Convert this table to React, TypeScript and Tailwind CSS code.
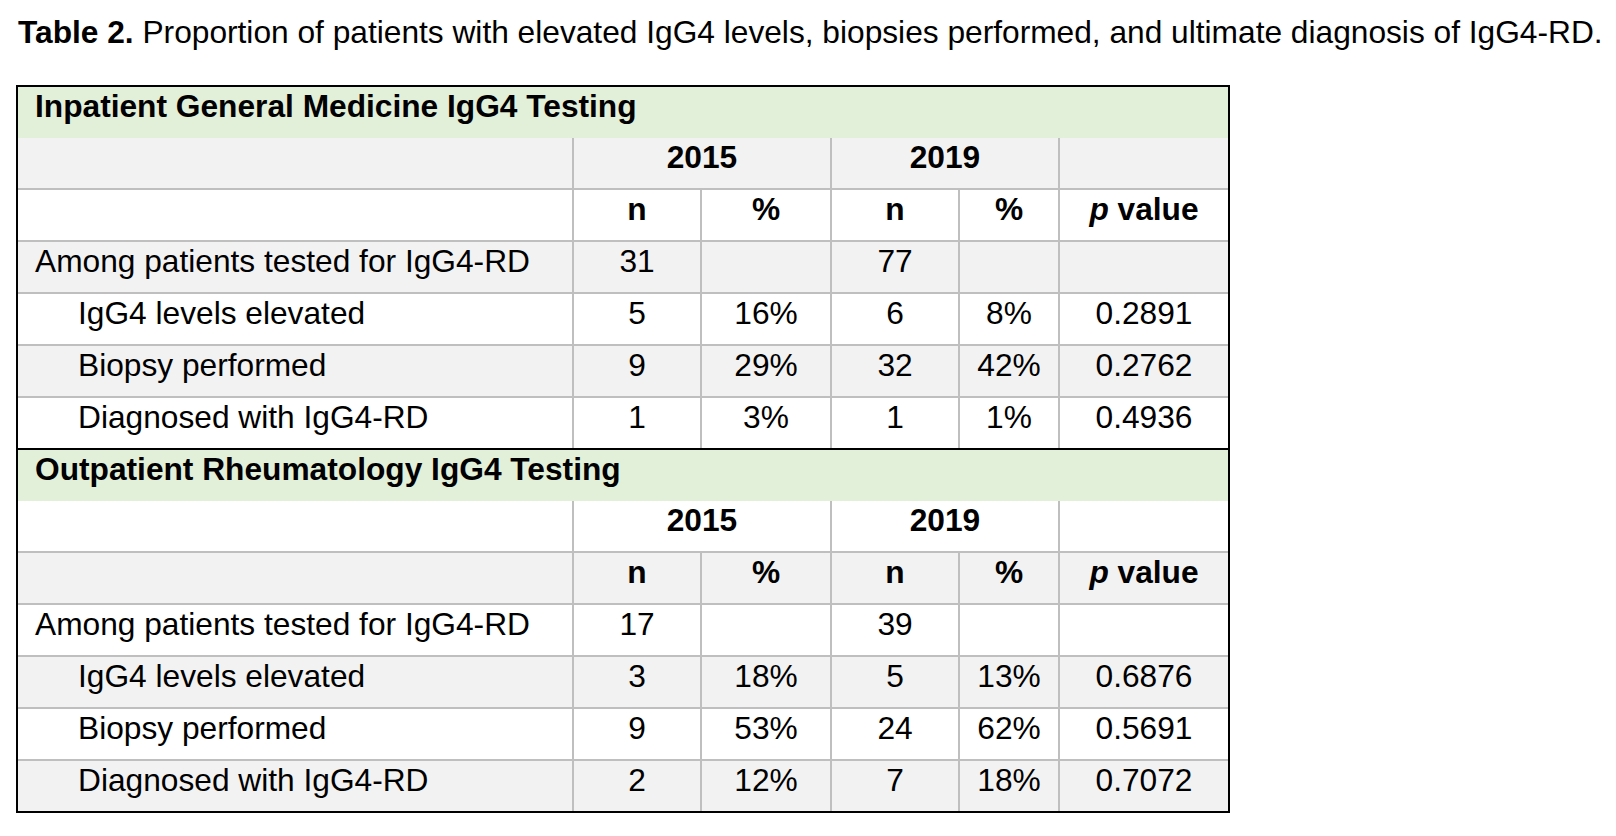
import React from 'react';

type Row = {
  label: string;
  indent?: boolean;
  n1: string;
  p1: string;
  n2: string;
  p2: string;
  pv: string;
};

const sections: { title: string; rows: Row[] }[] = [
  {
    title: 'Inpatient General Medicine IgG4 Testing',
    rows: [
      { label: 'Among patients tested for IgG4-RD', n1: '31', p1: '', n2: '77', p2: '', pv: '' },
      { label: 'IgG4 levels elevated', indent: true, n1: '5', p1: '16%', n2: '6', p2: '8%', pv: '0.2891' },
      { label: 'Biopsy performed', indent: true, n1: '9', p1: '29%', n2: '32', p2: '42%', pv: '0.2762' },
      { label: 'Diagnosed with IgG4-RD', indent: true, n1: '1', p1: '3%', n2: '1', p2: '1%', pv: '0.4936' },
    ],
  },
  {
    title: 'Outpatient Rheumatology IgG4 Testing',
    rows: [
      { label: 'Among patients tested for IgG4-RD', n1: '17', p1: '', n2: '39', p2: '', pv: '' },
      { label: 'IgG4 levels elevated', indent: true, n1: '3', p1: '18%', n2: '5', p2: '13%', pv: '0.6876' },
      { label: 'Biopsy performed', indent: true, n1: '9', p1: '53%', n2: '24', p2: '62%', pv: '0.5691' },
      { label: 'Diagnosed with IgG4-RD', indent: true, n1: '2', p1: '12%', n2: '7', p2: '18%', pv: '0.7072' },
    ],
  },
];

const cell = 'flex justify-center pt-[3px] border-r-2 border-[#bfbfbf]';

function Section({ title, rows, index }: { title: string; rows: Row[]; index: number }) {
  // first section: gray starts on the year row; second section: white
  const shade = (i: number) => ((i + index) % 2 === 0 ? 'bg-[#f2f2f2]' : 'bg-white');
  const last = index === 1;

  return (
    <>
      <div className="h-[51px] bg-[#e2efd9] pl-[17px] pt-[3px] font-bold">{title}</div>

      {/* year row */}
      <div className={`flex h-[52px] border-b-2 border-[#bfbfbf] ${shade(0)}`}>
        <div className="w-[556px] border-r-2 border-[#bfbfbf]" />
        <div className={`${cell} w-[258px] font-bold`}>2015</div>
        <div className={`${cell} w-[228px] font-bold`}>2019</div>
        <div className="w-[168px]" />
      </div>

      {/* column headings */}
      <div className={`flex h-[52px] border-b-2 border-[#bfbfbf] ${shade(1)}`}>
        <div className="w-[556px] border-r-2 border-[#bfbfbf]" />
        <div className={`${cell} w-[128px] font-bold`}>n</div>
        <div className={`${cell} w-[130px] font-bold`}>%</div>
        <div className={`${cell} w-[128px] font-bold`}>n</div>
        <div className={`${cell} w-[100px] font-bold`}>%</div>
        <div className="flex w-[168px] justify-center pt-[3px] font-bold">
          <span>
            <i>p</i> value
          </span>
        </div>
      </div>

      {rows.map((r, i) => {
        const isLast = i === rows.length - 1;
        const border = isLast ? (last ? '' : 'border-b-2 border-black') : 'border-b-2 border-[#bfbfbf]';
        return (
          <div key={r.label} className={`flex ${isLast && last ? 'h-[50px]' : 'h-[52px]'} ${border} ${shade(i + 2)}`}>
            <div className={`w-[556px] border-r-2 border-[#bfbfbf] pt-[3px] ${r.indent ? 'pl-[60px]' : 'pl-[17px]'}`}>
              {r.label}
            </div>
            <div className={`${cell} w-[128px]`}>{r.n1}</div>
            <div className={`${cell} w-[130px]`}>{r.p1}</div>
            <div className={`${cell} w-[128px]`}>{r.n2}</div>
            <div className={`${cell} w-[100px]`}>{r.p2}</div>
            <div className="flex w-[168px] justify-center pt-[3px]">{r.pv}</div>
          </div>
        );
      })}
    </>
  );
}

export default function App() {
  return (
    <div className="min-h-screen bg-white text-black text-[31.7px] leading-[32px] font-['Liberation_Sans',Arial,sans-serif]">
      <div className="pl-[18px] pt-[16px] whitespace-nowrap">
        <span className="font-bold">Table 2.</span> Proportion of patients with elevated IgG4 levels, biopsies
        performed, and ultimate diagnosis of IgG4-RD.
      </div>

      <div className="ml-[16px] mt-[37px] w-[1214px] border-2 border-black">
        {sections.map((s, i) => (
          <Section key={s.title} title={s.title} rows={s.rows} index={i} />
        ))}
      </div>
    </div>
  );
}
